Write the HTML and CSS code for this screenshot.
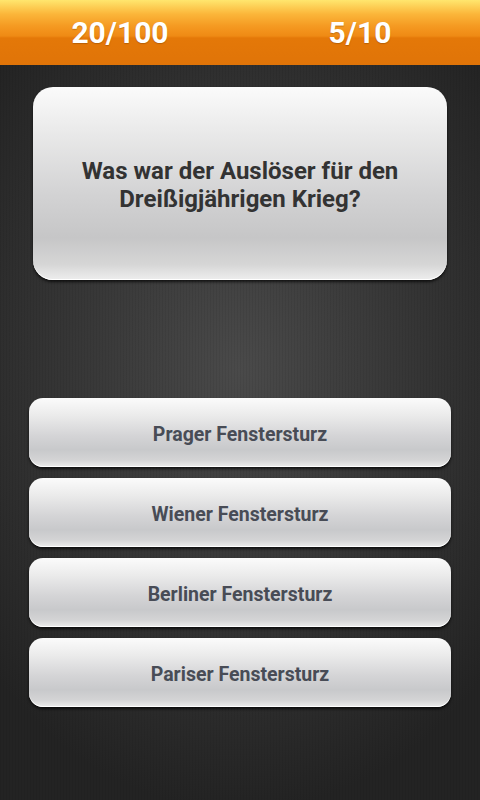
FILE: index.html
```html
<!DOCTYPE HTML>
<html>
	<head>
		<meta charset="utf-8"/>
		<title>Quiz</title>
		<link rel="stylesheet" href="styles.css">
	</head>
	<body>
		<div class="topbar">
			<span class="score">20/100</span>
			<span class="score">5/10</span>
		</div>

		<div class="question">
			Was war der Auslöser für den<br>
			Dreißigjährigen Krieg?
		</div>

		<div class="answers">
			<div class="answer">Prager Fenstersturz</div>
			<div class="answer">Wiener Fenstersturz</div>
			<div class="answer">Berliner Fenstersturz</div>
			<div class="answer">Pariser Fenstersturz</div>
		</div>
	</body>
</html>
```

FILE: styles.css
```css
html, body {
	margin: 0;
	height: 100%;
}
body {
	font-family: Roboto, "Noto Sans", sans-serif;
	background-color: #262626;
	background-image:
		repeating-linear-gradient(90deg, rgba(0,0,0,0.06) 0 1px, transparent 1px 3px),
		radial-gradient(ellipse 340px 440px at 240px 370px, #4a4a4a 0%, #383838 45%, #232323 100%);
	overflow: hidden;
}
.topbar {
	height: 65px;
	display: flex;
	align-items: center;
	background: linear-gradient(#ffe66e 0px, #fbb63a 14px, #f59a22 26px, #ef8a14 36px, #e47808 38px, #e07408 100%);
}
.score {
	flex: 1;
	text-align: center;
	color: #fff;
	font-size: 30px;
	font-weight: bold;
	text-shadow: 0 1px 1px rgba(120,60,0,0.4);
}
.question {
	margin: 22px 33px 0 33px;
	height: 193px;
	box-sizing: border-box;
	border-radius: 20px;
	display: flex;
	align-items: center;
	justify-content: center;
	text-align: center;
	padding-top: 2px;
	font-size: 24px;
	font-weight: bold;
	line-height: 28px;
	color: #333;
	background: linear-gradient(#fbfbfb 0%, #ececec 20%, #d3d3d4 55%, #c6c6c7 78%, #d6d6d6 92%, #eeeeee 100%);
	box-shadow: 0 2px 3px rgba(0,0,0,0.7), inset 0 -1px 0 #ffffff;
}
.answers {
	margin: 118px 29px 0 29px;
	display: flex;
	flex-direction: column;
	gap: 11px;
}
.answer {
	height: 69px;
	box-sizing: border-box;
	padding-top: 3px;
	border-radius: 14px;
	display: flex;
	align-items: center;
	justify-content: center;
	font-size: 19.5px;
	font-weight: bold;
	color: #484c56;
	background: linear-gradient(#fbfbfb 0%, #ebebeb 25%, #d4d4d6 55%, #c8c9cb 75%, #d4d4d5 90%, #ececec 100%);
	box-shadow: 0 2px 3px rgba(0,0,0,0.7), inset 0 -1px 0 #ffffff;
}
```
